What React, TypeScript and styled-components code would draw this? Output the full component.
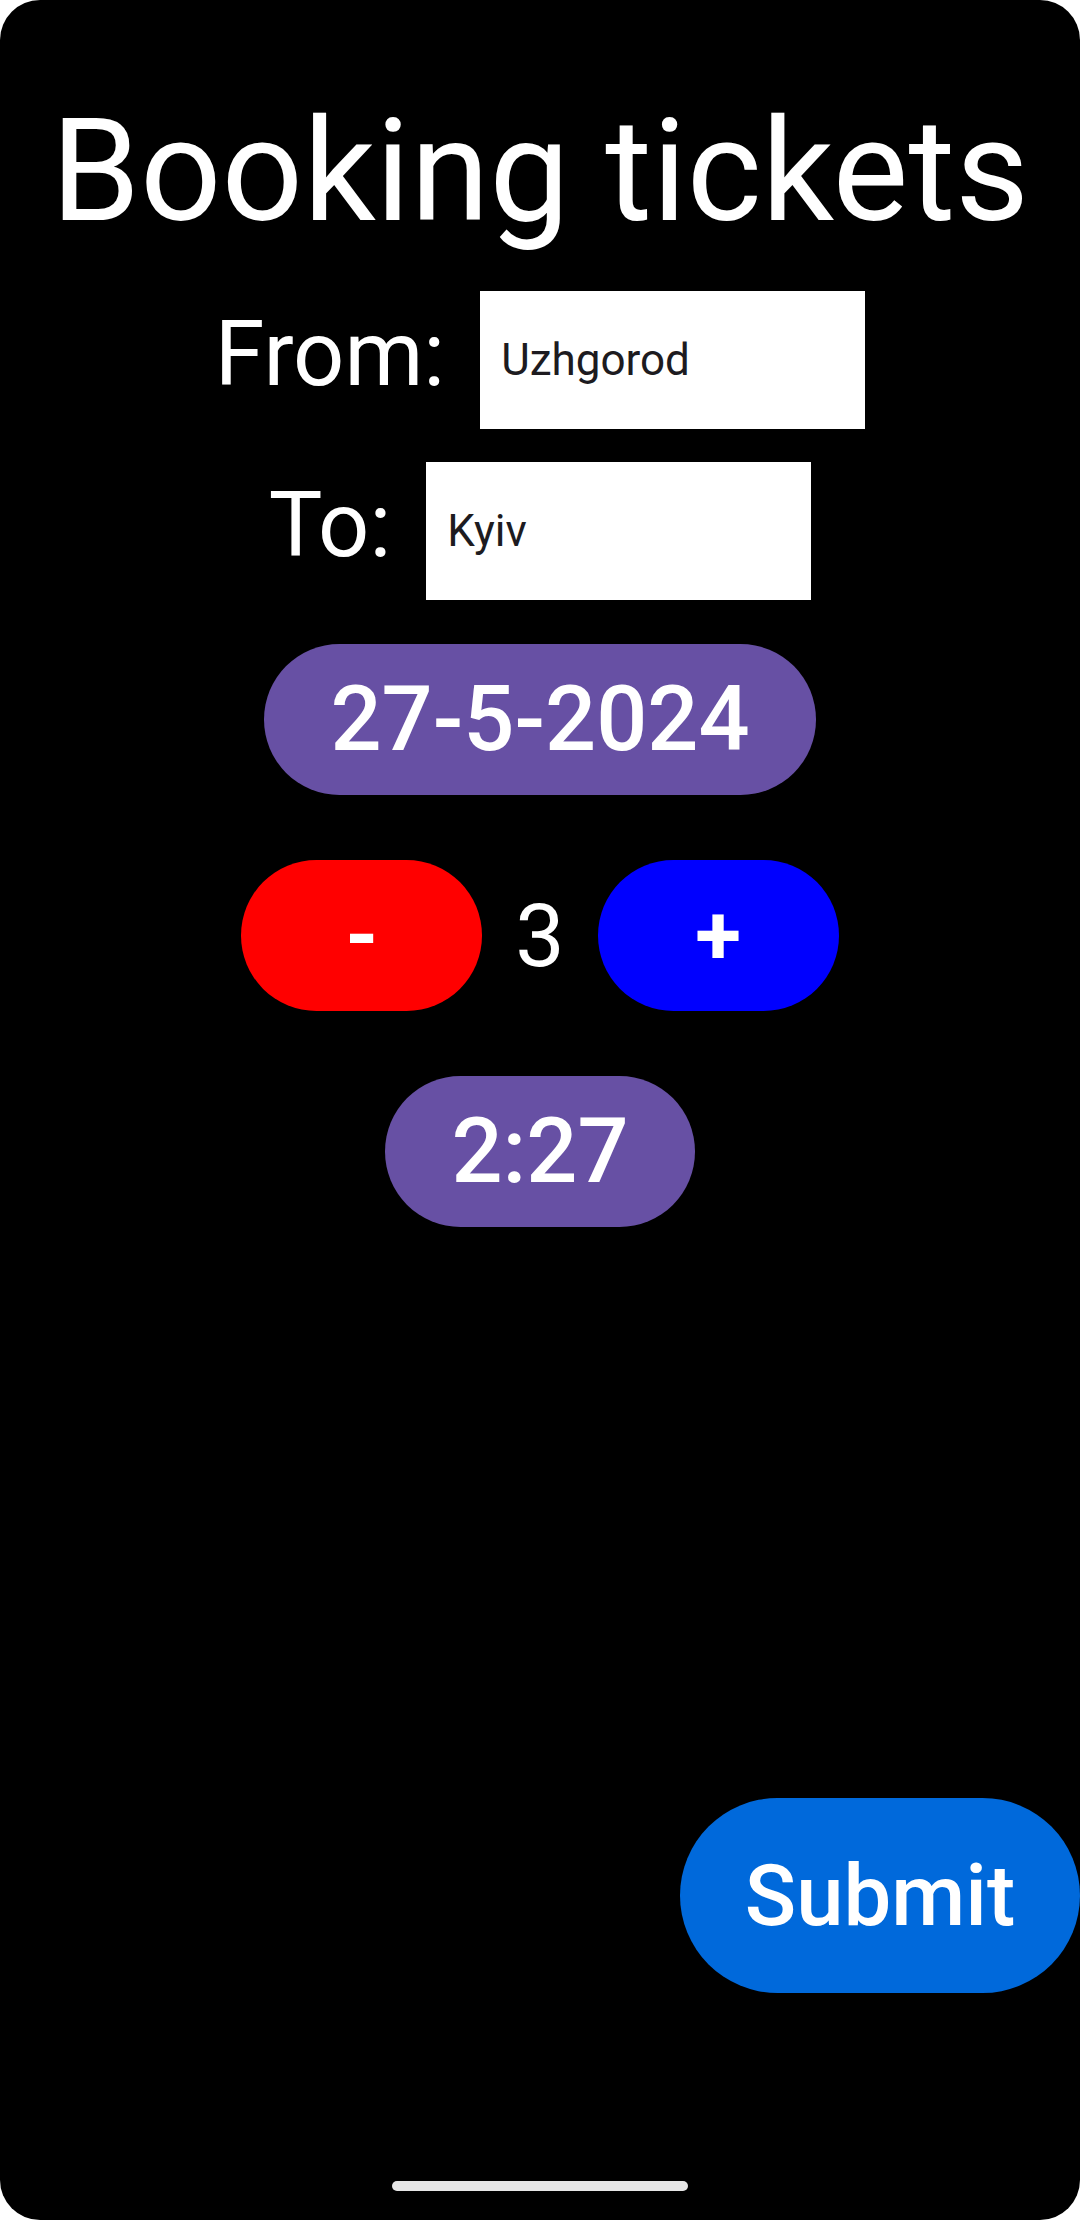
import * as React from "react";
import styled, { createGlobalStyle } from "styled-components";

const GlobalStyle = createGlobalStyle`
  html, body {
    margin: 0;
    padding: 0;
    background: #ffffff;
  }
  * {
    box-sizing: border-box;
  }
`;

const Screen = styled.div`
  width: 1080px;
  height: 2220px;
  background: #000000;
  border-radius: 40px;
  overflow: hidden;
  display: flex;
  flex-direction: column;
  align-items: center;
  font-family: Roboto, "Noto Sans", sans-serif;
  color: #ffffff;
  padding-top: 91px;
  padding-bottom: 29px;
`;

const Title = styled.h1`
  margin: 0;
  font-size: 143px;
  font-weight: 400;
  line-height: 160px;
  white-space: nowrap;
`;

const FieldRow = styled.div<{ $top: number }>`
  display: flex;
  align-items: center;
  gap: 35px;
  margin-top: ${(p) => p.$top}px;
`;

const Label = styled.span`
  font-size: 90px;
  line-height: 100px;
  padding-bottom: 10px;
`;

const Input = styled.input`
  width: 385px;
  height: 138px;
  border: none;
  outline: none;
  background: #ffffff;
  padding: 0 0 0 21px;
  font-family: Roboto, "Noto Sans", sans-serif;
  font-size: 44px;
  color: #1d1b20;
`;

const Pill = styled.button<{ $top: number }>`
  height: 151px;
  padding: 0 66px;
  margin-top: ${(p) => p.$top}px;
  border: none;
  border-radius: 76px;
  background: #6750a4;
  color: #ffffff;
  font-family: Roboto, "Noto Sans", sans-serif;
  font-size: 90px;
  font-weight: 500;
`;

const Counter = styled.div`
  display: flex;
  align-items: center;
  gap: 33px;
  margin-top: 65px;
`;

const StepButton = styled.button<{ $color: string }>`
  width: 241px;
  height: 151px;
  border: none;
  border-radius: 76px;
  background: ${(p) => p.$color};
  color: #ffffff;
  font-family: Roboto, "Noto Sans", sans-serif;
  font-size: 84px;
  font-weight: 700;
`;

const Count = styled.span`
  font-size: 88px;
  line-height: 151px;
`;

const SubmitRow = styled.div`
  align-self: stretch;
  display: flex;
  justify-content: flex-end;
  margin-top: auto;
`;

const SubmitButton = styled.button`
  width: 400px;
  height: 195px;
  border: none;
  border-radius: 98px;
  background: #0069db;
  color: #ffffff;
  font-family: Roboto, "Noto Sans", sans-serif;
  font-size: 85px;
  font-weight: 500;
`;

const HomeBar = styled.div`
  width: 296px;
  height: 10px;
  border-radius: 5px;
  background: #e6e6e6;
  margin-top: 188px;
`;

export default function App() {
  const [count, setCount] = React.useState(3);
  return (
    <>
      <GlobalStyle />
      <Screen>
        <Title>Booking tickets</Title>
        <FieldRow $top={40}>
          <Label>From:</Label>
          <Input defaultValue="Uzhgorod" />
        </FieldRow>
        <FieldRow $top={33}>
          <Label>To:</Label>
          <Input defaultValue="Kyiv" />
        </FieldRow>
        <Pill $top={44}>27-5-2024</Pill>
        <Counter>
          <StepButton $color="#ff0000" onClick={() => setCount(count - 1)}>
            -
          </StepButton>
          <Count>{count}</Count>
          <StepButton $color="#0000ff" onClick={() => setCount(count + 1)}>
            +
          </StepButton>
        </Counter>
        <Pill $top={65}>2:27</Pill>
        <SubmitRow>
          <SubmitButton>Submit</SubmitButton>
        </SubmitRow>
        <HomeBar />
      </Screen>
    </>
  );
}
